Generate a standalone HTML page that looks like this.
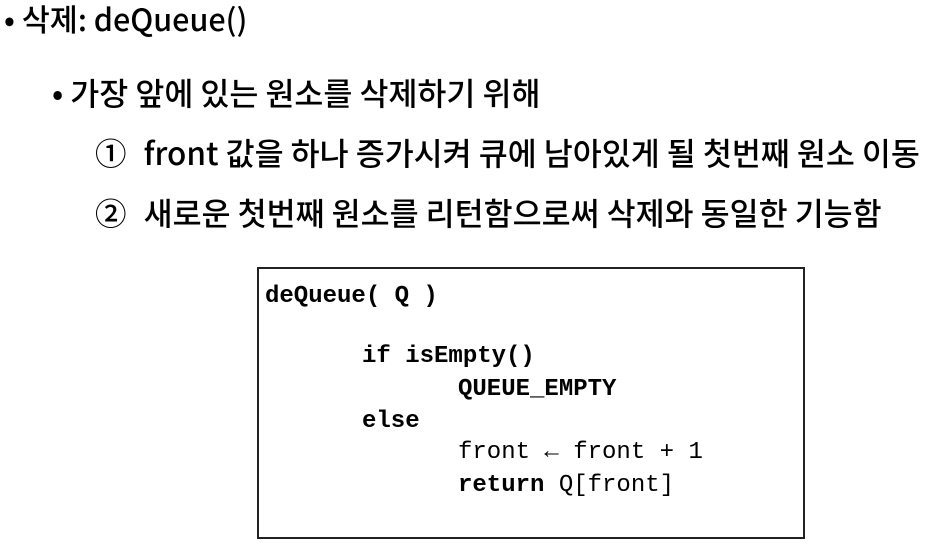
<!DOCTYPE html>
<html><head><meta charset="utf-8"><style>
body{margin:0;width:925px;height:544px;background:#fff;position:relative;overflow:hidden;font-family:"Noto Sans CJK KR",sans-serif;color:#000}
.t{position:absolute;font-size:31.5px;line-height:1;white-space:nowrap;font-weight:500}
.box{position:absolute;left:257px;top:267px;width:548px;height:272px;border:2px solid #222;box-sizing:border-box}
.c{position:absolute;font-family:"Liberation Mono",monospace;font-size:24px;line-height:1;white-space:pre}
b{font-weight:bold}
</style></head><body>
<div class="t" style="left:4px;top:3px;font-size:30.5px">• 삭제: deQueue()</div>
<div class="t" style="left:52px;top:77px">• 가장 앞에 있는 원소를 삭제하기 위해</div>
<div class="t" style="left:95px;top:137px">① <span style="margin-left:10px">front 값을 하나 증가시켜 큐에 남아있게 될 첫번째 원소 이동</span></div>
<div class="t" style="left:95px;top:197px">② <span style="margin-left:10px">새로운 첫번째 원소를 리턴함으로써 삭제와 동일한 기능함</span></div>
<div class="box"></div>
<div class="c" style="left:265px;top:285px"><b>deQueue( Q )</b></div>
<div class="c" style="left:362px;top:345px"><b>if isEmpty()</b></div>
<div class="c" style="left:458px;top:378px"><b>QUEUE_EMPTY</b></div>
<div class="c" style="left:362px;top:410px"><b>else</b></div>
<div class="c" style="left:458px;top:441px">front ← front + 1</div>
<div class="c" style="left:458px;top:474px"><b>return</b> Q[front]</div>
</body></html>
